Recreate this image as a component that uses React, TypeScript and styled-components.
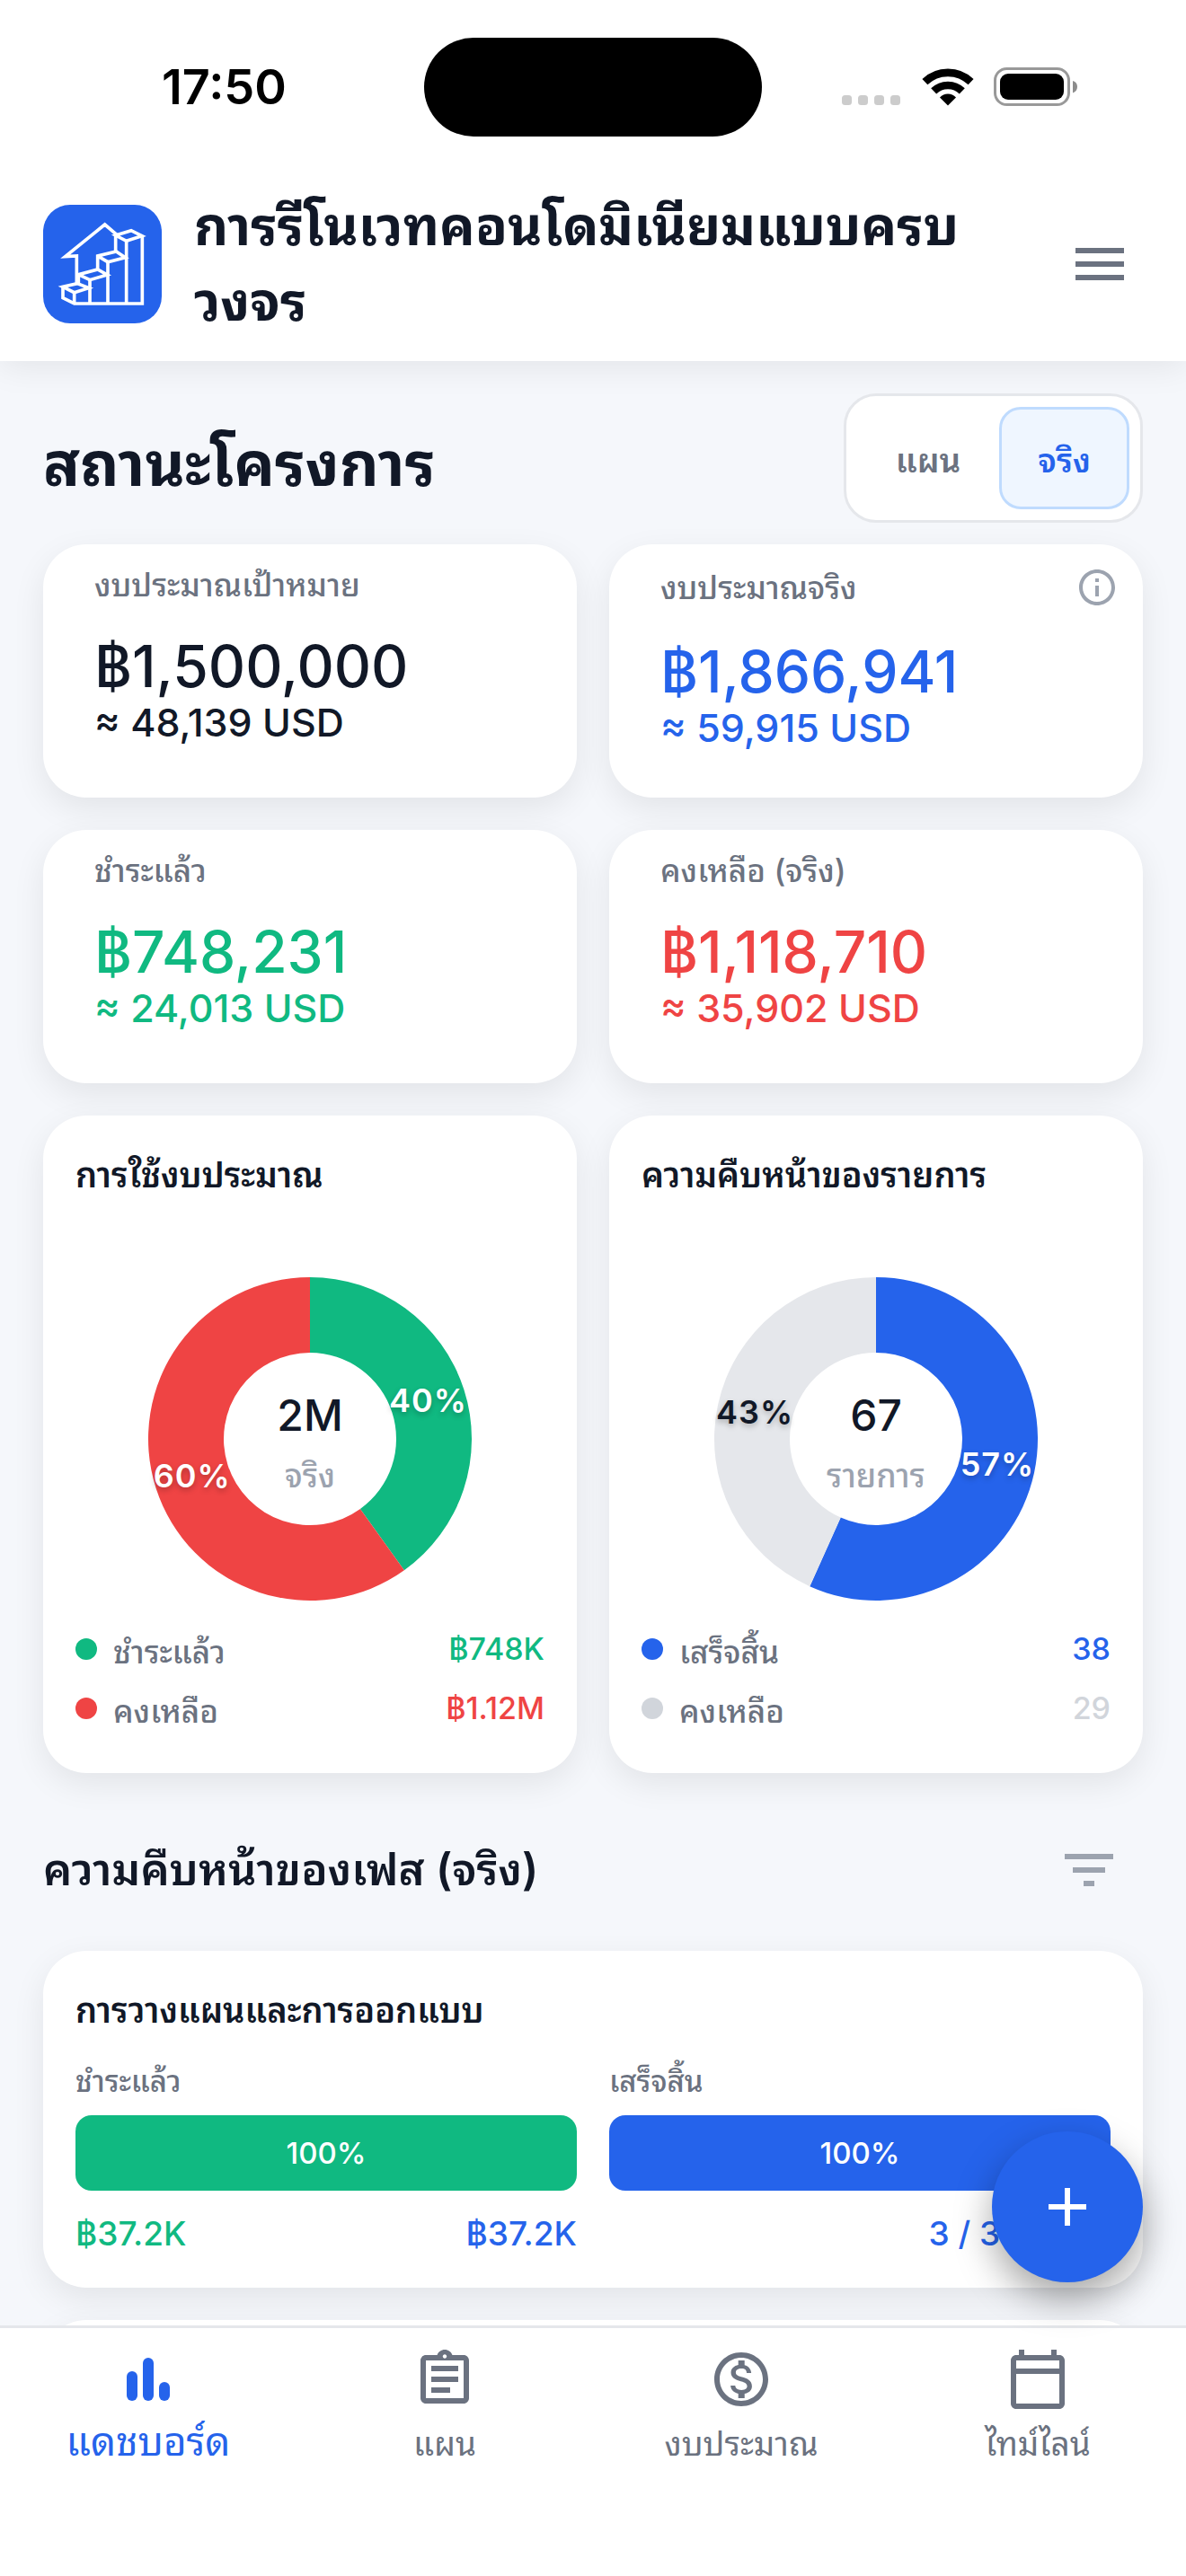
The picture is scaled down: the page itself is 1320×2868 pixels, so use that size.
import * as React from "react";
import styled, { createGlobalStyle } from "styled-components";
import {
  MdAdd,
  MdFilterList,
  MdInfoOutline,
  MdMenu,
  MdOutlineAssignment,
  MdOutlineCalendarToday,
  MdOutlineMonetizationOn,
} from "react-icons/md";

const colors = {
  page: "#f5f7fb",
  card: "#ffffff",
  ink: "#111827",
  muted: "#6b7280",
  faint: "#9ca3af",
  line: "#e5e7eb",
  pale: "#d1d5db",
  blue: "#2563eb",
  blueLine: "#bfdbfe",
  blueSoft: "#eff6ff",
  green: "#10b981",
  red: "#ef4444",
};

const GlobalStyle = createGlobalStyle`
  *, *::before, *::after {
    box-sizing: border-box;
  }

  body {
    margin: 0;
    background: ${colors.page};
    color: ${colors.ink};
    font-family: Inter, "Noto Sans Thai Looped", "Noto Sans Thai", "Noto Sans", sans-serif;
  }

  h1, h2, h3, p, ul {
    margin: 0;
    padding: 0;
  }

  button {
    font: inherit;
    border: none;
    background: none;
    padding: 0;
    cursor: pointer;
  }
`;

const Screen = styled.div`
  display: flex;
  flex-direction: column;
  height: 100vh;
`;

/* status bar */

const StatusBar = styled.div`
  position: relative;
  z-index: 2;
  display: grid;
  grid-template-columns: 1fr auto 1fr;
  align-items: center;
  padding: 42px 120px 34px;
  background: ${colors.card};
`;

const Clock = styled.time`
  padding-left: 60px;
  font-size: 54px;
  line-height: 64px;
  font-weight: 600;
  color: #000;
`;

const Island = styled.div`
  width: 376px;
  height: 110px;
  border-radius: 55px;
  background: #000;
`;

const StatusIcons = styled.div`
  display: flex;
  justify-content: flex-end;
  align-items: center;
  gap: 22px;
`;

function SignalDots() {
  return (
    <svg width="67" height="44" viewBox="0 0 67 44" fill="#cccccc" aria-hidden="true">
      {[0, 18, 36, 54].map(x => <rect key={x} x={x} y="31" width="11" height="11" rx="3.5" />)}
    </svg>
  );
}

function WifiIcon() {
  return (
    <svg width="58" height="44" viewBox="0 0 58 44" aria-hidden="true">
      <g fill="none" stroke="#000" strokeWidth="8.6">
        <path d="M3.4 16.2a37 37 0 0 1 51.2 0" />
        <path d="M13.2 26.4a22.6 22.6 0 0 1 31.6 0" />
      </g>
      <path d="M29 42.4l-9-9a12.6 12.6 0 0 1 18 0z" fill="#000" />
    </svg>
  );
}

function BatteryIcon() {
  return (
    <svg width="94" height="44" viewBox="0 0 94 44" aria-hidden="true">
      <rect x="1.5" y="1.5" width="82" height="40" rx="13" fill="none" stroke="#999" strokeWidth="3" />
      <rect x="7" y="7" width="71" height="29" rx="9" fill="#000" />
      <path d="M88 15c3.5 1.2 5 3.6 5 6.500s-1.500 5.800-5 7z" fill="#8c8c8c" />
    </svg>
  );
}

/* app header */

const Header = styled.header`
  position: relative;
  z-index: 1;
  display: flex;
  align-items: center;
  gap: 36px;
  padding: 24px 60px 24px 48px;
  background: ${colors.card};
  box-shadow: 0 6px 36px rgba(0, 0, 0, 0.08);
`;

const Logo = styled.svg`
  flex: none;
  width: 132px;
  height: 132px;
  border-radius: 30px;
  background: ${colors.blue};
`;

const AppTitle = styled.h1`
  flex: 1;
  font-size: 59px;
  line-height: 84px;
  font-weight: 700;
`;

const IconButton = styled.button<{ $color?: string }>`
  display: grid;
  place-items: center;
  flex: none;
  width: 72px;
  height: 72px;
  color: ${props => props.$color || colors.muted};
`;

function HouseLogo() {
  return (
    <Logo viewBox="0 0 396 396" role="img" aria-label="โลโก้">
      <g fill="none" stroke="#fff" strokeWidth="11" strokeLinejoin="miter">
        <path d="M242 156V98M246 100L206 66L74 173L112 171V262" />
        <path d="M242 102L294 86L330 104L278 121Z" />
        <path d="M331 104V330H104L66 311V274" />
        <path d="M182 216V171L244 156L274 176L216 191L182 171" />
        <path d="M118 262V233L182 216L214 234L156 251L118 233" />
        <path d="M66 274L114 263L152 278L104 293Z" />
        <path d="M278 121V328M216 191V328M156 251V328M104 293V328" />
      </g>
    </Logo>
  );
}

/* content */

const Content = styled.main`
  flex: 1;
  min-height: 0;
  overflow-y: auto;
  scrollbar-width: none;
  padding: 36px 48px;
`;

const SectionHead = styled.div`
  display: flex;
  align-items: center;
  justify-content: space-between;
`;

const PageTitle = styled.h2`
  padding-top: 12px;
  font-size: 68px;
  line-height: 84px;
  font-weight: 700;
`;

const Toggle = styled.div`
  display: flex;
  padding: 12px;
  border: 3px solid ${colors.line};
  border-radius: 36px;
  background: ${colors.card};
`;

const ToggleButton = styled.button<{ $active: boolean }>`
  height: 114px;
  padding: 6px 40px 0;
  border: 3px solid ${props => props.$active ? colors.blueLine : "transparent"};
  border-radius: 24px;
  background: ${props => props.$active ? colors.blueSoft : "transparent"};
  color: ${props => props.$active ? colors.blue : colors.muted};
  font-size: 37px;
  line-height: 54px;
  font-weight: 600;
`;

const Grid = styled.div`
  display: grid;
  grid-template-columns: repeat(2, minmax(0, 1fr));
  gap: 36px;
  margin-top: 24px;
`;

const Card = styled.section`
  border-radius: 48px;
  background: ${colors.card};
  box-shadow: 0 12px 36px rgba(0, 0, 0, 0.08);
`;

const KpiCard = styled(Card)`
  min-height: 282px;
  padding: 24px 27px 36px 57px;
`;

const KpiHead = styled.div`
  display: flex;
  align-items: center;
  justify-content: space-between;
`;

const KpiLabel = styled.h3`
  font-size: 35px;
  line-height: 42px;
  font-weight: 500;
  color: ${colors.muted};
`;

const KpiValue = styled.p<{ $color: string }>`
  padding-top: 30px;
  font-size: 64px;
  line-height: 80px;
  font-weight: 500;
  color: ${props => props.$color};
`;

const KpiUsd = styled.p<{ $color: string }>`
  font-size: 43px;
  line-height: 45px;
  font-weight: 500;
  color: ${props => props.$color};
`;

const InfoButton = styled.button`
  display: grid;
  width: 48px;
  height: 48px;
  color: ${colors.faint};
`;

interface KpiProps {
  label: string;
  value: string;
  usd: string;
  color: string;
  info?: boolean;
}

function Kpi({ label, value, usd, color, info }: KpiProps) {
  return (
    <KpiCard>
      <KpiHead>
        <KpiLabel>{label}</KpiLabel>
        {info && (
          <InfoButton aria-label="ข้อมูล">
            <MdInfoOutline size={48} />
          </InfoButton>
        )}
      </KpiHead>
      <KpiValue $color={color}>{value}</KpiValue>
      <KpiUsd $color={color}>{usd}</KpiUsd>
    </KpiCard>
  );
}

/* donut cards */

const ChartCard = styled(Card)`
  padding: 36px 36px 39px;
`;

const CardTitle = styled.h3`
  font-size: 38px;
  line-height: 60px;
  font-weight: 600;
`;

const DonutSvg = styled.svg`
  display: block;
  width: 360px;
  height: 360px;
  margin: 84px auto 21px;
  overflow: visible;
`;

const Percent = styled.text`
  font-size: 36px;
  font-weight: 600;
  letter-spacing: 1px;
  text-anchor: middle;
  text-shadow: 0 3px 6px rgba(0, 0, 0, 0.25);
`;

const DonutTotal = styled.text`
  font-size: 48px;
  font-weight: 500;
  text-anchor: middle;
  fill: ${colors.ink};
`;

const DonutUnit = styled.text`
  font-size: 36px;
  font-weight: 500;
  text-anchor: middle;
  fill: ${colors.faint};
`;

const Legend = styled.ul`
  list-style: none;
`;

const LegendRow = styled.li`
  display: flex;
  align-items: center;
  gap: 18px;
  height: 66px;
  line-height: 48px;
  font-weight: 500;
`;

const Dot = styled.span<{ $color: string }>`
  width: 24px;
  height: 24px;
  border-radius: 50%;
  background: ${props => props.$color};
`;

const LegendLabel = styled.span`
  flex: 1;
  padding-top: 6px;
  font-size: 35px;
  color: ${colors.muted};
`;

const LegendValue = styled.span<{ $color: string }>`
  font-size: 34px;
  color: ${props => props.$color};
`;

interface Slice {
  label: string;
  value: string;
  share: number;
  fill: string;
  dot?: string;
  textFill?: string;
}

interface DonutProps {
  title: string;
  total: string;
  unit: string;
  slices: Slice[];
}

const OUTER = 180;
const INNER = 96;

function pointAt(turn: number, radius: number) {
  const angle = turn * Math.PI * 2;
  return [Math.sin(angle) * radius, -Math.cos(angle) * radius];
}

function arcPath(from: number, to: number) {
  const large = to - from > 0.5 ? 1 : 0;
  const [ax, ay] = pointAt(from, OUTER);
  const [bx, by] = pointAt(to, OUTER);
  const [cx, cy] = pointAt(to, INNER);
  const [dx, dy] = pointAt(from, INNER);
  return `M${ax} ${ay}A${OUTER} ${OUTER} 0 ${large} 1 ${bx} ${by}L${cx} ${cy}A${INNER} ${INNER} 0 ${large} 0 ${dx} ${dy}Z`;
}

function Donut({ title, total, unit, slices }: DonutProps) {
  let start = 0;
  const arcs = slices.map(slice => {
    const from = start;
    start += slice.share;
    return { ...slice, from, to: start };
  });

  return (
    <ChartCard>
      <CardTitle>{title}</CardTitle>
      <DonutSvg viewBox="-180 -180 360 360" role="img" aria-label={title}>
        {arcs.map(arc => <path key={arc.label} d={arcPath(arc.from, arc.to)} fill={arc.fill} />)}
        {arcs.map(arc => {
          const [x, y] = pointAt((arc.from + arc.to) / 2, (OUTER + INNER) / 2);
          return (
            <Percent key={arc.label} x={x} y={y + 12} fill={arc.textFill || "#fff"}>
              {Math.round(arc.share * 100)}%
            </Percent>
          );
        })}
        <DonutTotal y={-9}>{total}</DonutTotal>
        <DonutUnit y={54}>{unit}</DonutUnit>
      </DonutSvg>
      <Legend>
        {slices.map(slice => (
          <LegendRow key={slice.label}>
            <Dot $color={slice.dot || slice.fill} />
            <LegendLabel>{slice.label}</LegendLabel>
            <LegendValue $color={slice.dot || slice.fill}>{slice.value}</LegendValue>
          </LegendRow>
        ))}
      </Legend>
    </ChartCard>
  );
}

/* phases */

const PhaseHead = styled(SectionHead)`
  padding: 72px 24px 54px 0;
`;

const PhaseTitle = styled.h2`
  font-size: 49px;
  line-height: 72px;
  font-weight: 600;
`;

const PhaseCard = styled(Card)`
  min-height: 375px;
  padding: 36px;
  margin-bottom: 36px;
`;

const PhaseColumns = styled.div`
  display: grid;
  grid-template-columns: repeat(2, minmax(0, 1fr));
  gap: 36px;
  margin-top: 24px;
`;

const PhaseLabel = styled.p`
  font-size: 33px;
  line-height: 51px;
  margin-bottom: 12px;
  font-weight: 500;
  color: ${colors.muted};
`;

const Track = styled.div`
  height: 84px;
  border-radius: 18px;
  overflow: hidden;
  background: ${colors.line};
`;

const Bar = styled.div<{ $color: string }>`
  display: grid;
  place-items: center;
  height: 100%;
  background: ${props => props.$color};
  color: #fff;
  font-size: 33px;
  font-weight: 500;
`;

const Amounts = styled.div<{ $end?: boolean }>`
  display: flex;
  justify-content: ${props => props.$end ? "flex-end" : "space-between"};
  margin-top: 24px;
  font-size: 37px;
  line-height: 48px;
  font-weight: 500;
`;

const Amount = styled.span<{ $color: string }>`
  color: ${props => props.$color};
`;

/* bottom navigation */

const BottomBar = styled.div`
  position: relative;
`;

const Fab = styled.button`
  position: absolute;
  right: 48px;
  bottom: calc(100% + 48px);
  display: grid;
  place-items: center;
  width: 168px;
  height: 168px;
  border-radius: 50%;
  background: ${colors.blue};
  color: #fff;
  box-shadow: 0 18px 42px rgba(0, 0, 0, 0.35);
`;

const Nav = styled.nav`
  display: grid;
  grid-template-columns: repeat(4, 1fr);
  padding: 21px 0 102px;
  border-top: 3px solid ${colors.line};
  background: ${colors.card};
`;

const NavLink = styled.a<{ $active?: boolean }>`
  display: flex;
  flex-direction: column;
  align-items: center;
  gap: ${props => props.$active ? 6 : 9}px;
  min-height: 153px;
  color: ${props => props.$active ? colors.blue : colors.muted};
  font-size: ${props => props.$active ? 44 : 37}px;
  line-height: 54px;
  text-decoration: none;
`;

function BarsIcon() {
  return (
    <svg width="72" height="72" viewBox="0 0 72 72" fill="currentColor" aria-hidden="true">
      <rect x="12" y="27" width="12" height="33" rx="6" />
      <rect x="30" y="12" width="12" height="48" rx="6" />
      <rect x="48" y="39" width="12" height="21" rx="6" />
    </svg>
  );
}

const kpis: KpiProps[] = [
  { label: "งบประมาณเป้าหมาย", value: "฿1,500,000", usd: "≈ 48,139 USD", color: colors.ink },
  { label: "งบประมาณจริง", value: "฿1,866,941", usd: "≈ 59,915 USD", color: colors.blue, info: true },
  { label: "ชำระแล้ว", value: "฿748,231", usd: "≈ 24,013 USD", color: colors.green },
  { label: "คงเหลือ (จริง)", value: "฿1,118,710", usd: "≈ 35,902 USD", color: colors.red },
];

const budgetSlices: Slice[] = [
  { label: "ชำระแล้ว", value: "฿748K", share: 0.401, fill: colors.green },
  { label: "คงเหลือ", value: "฿1.12M", share: 0.599, fill: colors.red },
];

const itemSlices: Slice[] = [
  { label: "เสร็จสิ้น", value: "38", share: 38 / 67, fill: colors.blue },
  { label: "คงเหลือ", value: "29", share: 29 / 67, fill: colors.line, dot: colors.pale, textFill: colors.ink },
];

function App() {
  const [mode, setMode] = React.useState("actual");

  return (
    <Screen>
      <GlobalStyle />
      <StatusBar>
        <Clock>17:50</Clock>
        <Island />
        <StatusIcons>
          <SignalDots />
          <WifiIcon />
          <BatteryIcon />
        </StatusIcons>
      </StatusBar>
      <Header>
        <HouseLogo />
        <AppTitle>การรีโนเวทคอนโดมิเนียมแบบครบวงจร</AppTitle>
        <IconButton aria-label="เมนู">
          <MdMenu size={72} />
        </IconButton>
      </Header>
      <Content>
        <SectionHead>
          <PageTitle>สถานะโครงการ</PageTitle>
          <Toggle>
            <ToggleButton $active={mode === "plan"} onClick={() => setMode("plan")}>แผน</ToggleButton>
            <ToggleButton $active={mode === "actual"} onClick={() => setMode("actual")}>จริง</ToggleButton>
          </Toggle>
        </SectionHead>
        <Grid>
          {kpis.map(kpi => <Kpi key={kpi.label} {...kpi} />)}
          <Donut title="การใช้งบประมาณ" total="2M" unit="จริง" slices={budgetSlices} />
          <Donut title="ความคืบหน้าของรายการ" total="67" unit="รายการ" slices={itemSlices} />
        </Grid>
        <PhaseHead>
          <PhaseTitle>ความคืบหน้าของเฟส (จริง)</PhaseTitle>
          <IconButton $color={colors.faint} aria-label="ตัวกรอง">
            <MdFilterList size={72} />
          </IconButton>
        </PhaseHead>
        <PhaseCard>
          <CardTitle>การวางแผนและการออกแบบ</CardTitle>
          <PhaseColumns>
            <div>
              <PhaseLabel>ชำระแล้ว</PhaseLabel>
              <Track><Bar $color={colors.green} style={{ width: "100%" }}>100%</Bar></Track>
              <Amounts>
                <Amount $color={colors.green}>฿37.2K</Amount>
                <Amount $color={colors.blue}>฿37.2K</Amount>
              </Amounts>
            </div>
            <div>
              <PhaseLabel>เสร็จสิ้น</PhaseLabel>
              <Track><Bar $color={colors.blue} style={{ width: "100%" }}>100%</Bar></Track>
              <Amounts $end>
                <Amount $color={colors.blue}>3 / 3 รายการ</Amount>
              </Amounts>
            </div>
          </PhaseColumns>
        </PhaseCard>
        <PhaseCard />
      </Content>
      <BottomBar>
        <Nav>
          <NavLink href="#dashboard" $active>
            <BarsIcon />
            แดชบอร์ด
          </NavLink>
          <NavLink href="#plan">
            <MdOutlineAssignment size={72} />
            แผน
          </NavLink>
          <NavLink href="#budget">
            <MdOutlineMonetizationOn size={72} />
            งบประมาณ
          </NavLink>
          <NavLink href="#timeline">
            <MdOutlineCalendarToday size={72} />
            ไทม์ไลน์
          </NavLink>
        </Nav>
        <Fab aria-label="เพิ่ม">
          <MdAdd size={72} />
        </Fab>
      </BottomBar>
    </Screen>
  );
}

export default App;
